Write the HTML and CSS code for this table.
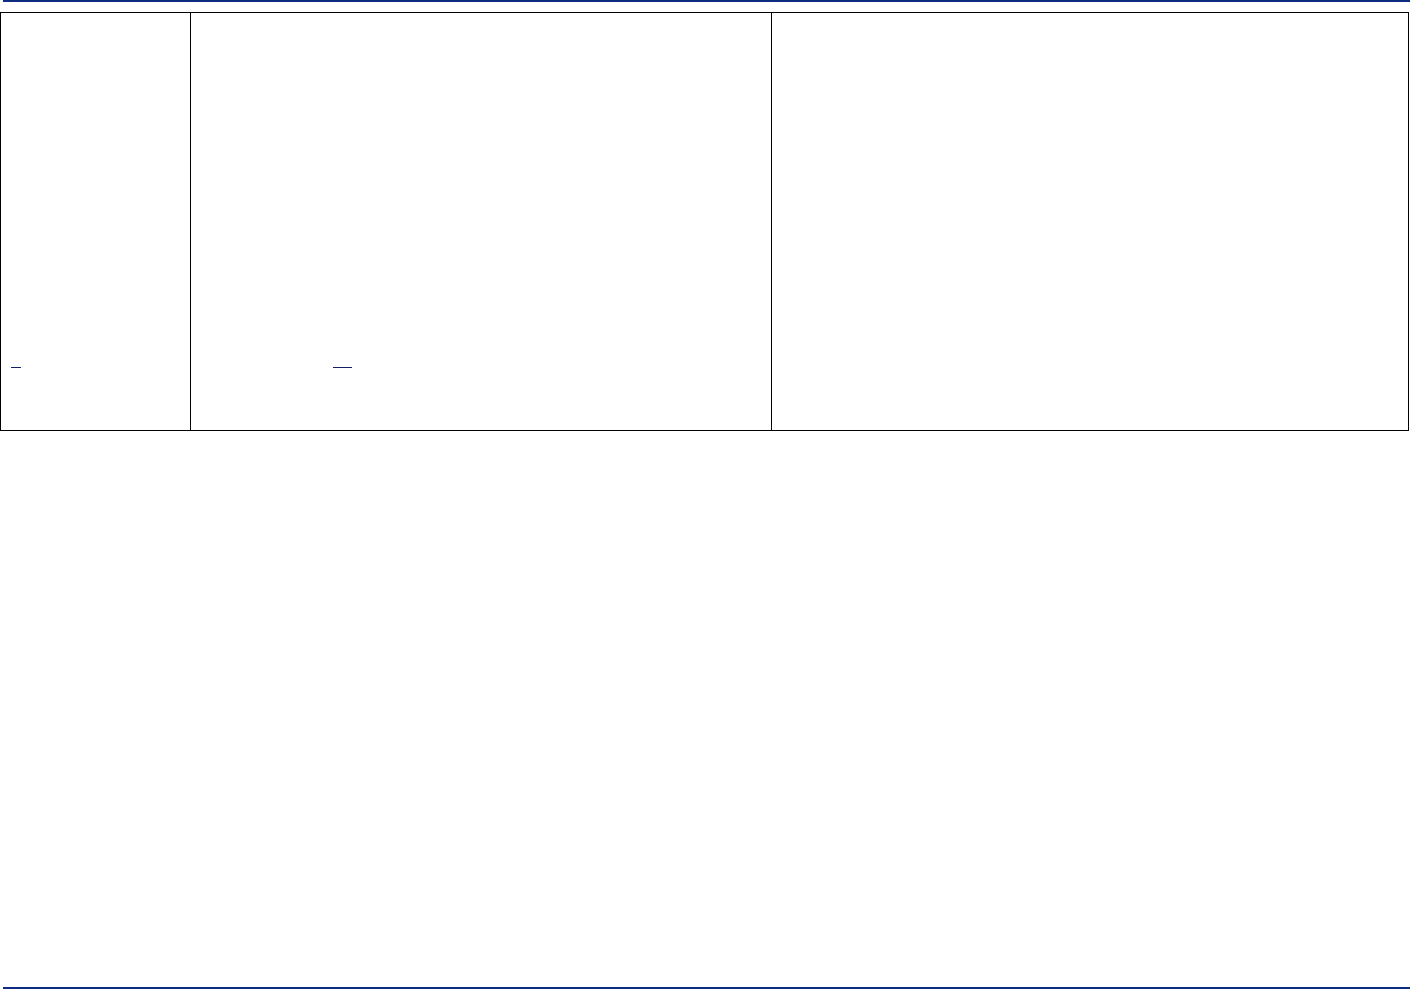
FILE: index.html
```html
<!DOCTYPE html>
<html lang="en">
<head>
    <meta charset="UTF-8">
    <meta name="viewport" content="width=device-width, initial-scale=1.0">
    <title>Page</title>
    <link rel="stylesheet" href="styles.css">
</head>
<body>
    <div class="page">
        <div class="rule top-rule"></div>
        <div class="grid">
            <div class="cell cell-left">
                <a class="blank-link short" href="#">&nbsp;</a>
            </div>
            <div class="cell cell-middle">
                <a class="blank-link long" href="#">&nbsp;</a>
            </div>
            <div class="cell cell-right"></div>
        </div>
        <div class="rule bottom-rule"></div>
    </div>
</body>
</html>
```

FILE: styles.css
```css
html, body {
    margin: 0;
    padding: 0;
    background: #ffffff;
    font-family: 'Liberation Sans', Arial, sans-serif;
    font-size: 16px;
}

.page {
    display: flex;
    flex-direction: column;
    min-height: 100vh;
}

.rule {
    height: 2px;
    margin-left: 3px;
    background: #0e2c80;
}

.bottom-rule {
    margin-top: auto;
    margin-bottom: 0;
}

.grid {
    display: flex;
    box-sizing: border-box;
    width: 1409px;
    height: 419px;
    margin-top: 10px;
    border: 1px solid #000000;
}

.cell {
    box-sizing: border-box;
    height: 100%;
    padding-top: 353px;
}

.cell-left {
    width: 190px;
    border-right: 1px solid #000000;
    padding-left: 10px;
}

.cell-middle {
    width: 581px;
    border-right: 1px solid #000000;
    padding-left: 142px;
}

.cell-right {
    flex: 1;
}

.blank-link {
    display: block;
    height: 1px;
    overflow: hidden;
    border-bottom: 1px solid #141f66;
    color: transparent;
    line-height: 1px;
    font-size: 1px;
}

.blank-link.short {
    width: 10px;
}

.blank-link.long {
    width: 19px;
}
```
